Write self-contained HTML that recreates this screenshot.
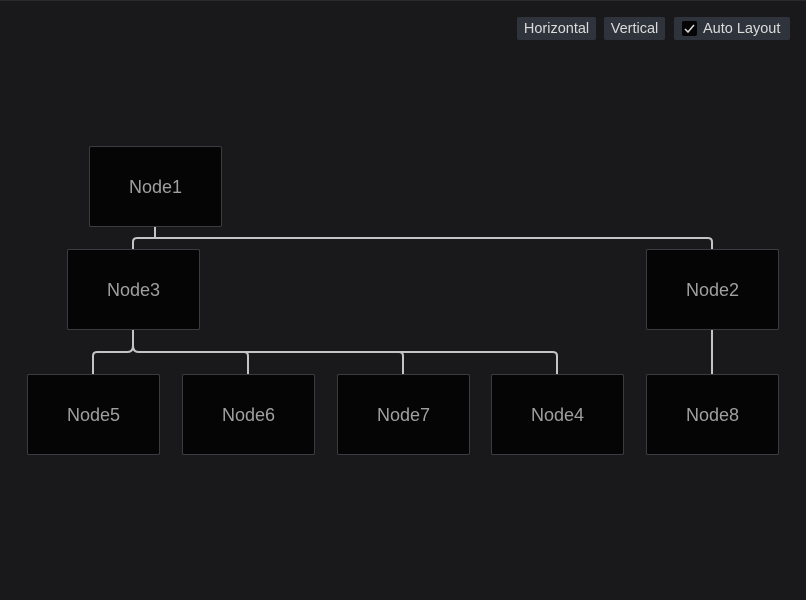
<!DOCTYPE html><html><head><style>
body{margin:0;width:806px;height:600px;background:#19191b;font-family:"Liberation Sans",sans-serif;overflow:hidden;position:relative}
.n{position:absolute;width:131px;height:79px;background:#050505;border:1px solid #3c3c40;border-radius:2px;color:#a0a0a0;font-size:18px;display:flex;align-items:center;justify-content:center;padding-top:1px;box-sizing:content-box}
.b{position:absolute;top:17px;height:23px;background:#2f333b;border-radius:2px;color:#dcdcdc;font-size:14.5px;display:flex;align-items:center;justify-content:center}
</style></head><body>
<div style="position:absolute;left:0;top:0;width:806px;height:1px;background:#2a2a2d"></div>
<svg width="806" height="600" style="position:absolute;left:0;top:0" fill="none" stroke="#c4c4c6" stroke-width="2">
<path d="M155 226V238M133 249V242Q133 238 137 238H708Q712 238 712 242V249"/>
<path d="M712 329V374"/>
<path d="M133 329V346Q133 352 139 352H553Q557 352 557 356V374M133 346Q133 352 127 352H97Q93 352 93 356V374M248 374V356Q248 352 244 352M403 374V356Q403 352 399 352"/>
</svg>
<div class="n" style="left:89px;top:146px;height:78px">Node1</div>
<div class="n" style="left:67px;top:249px;height:78px">Node3</div>
<div class="n" style="left:646px;top:249px;height:78px">Node2</div>
<div class="n" style="left:27px;top:374px;height:78px">Node5</div>
<div class="n" style="left:182px;top:374px;height:78px">Node6</div>
<div class="n" style="left:337px;top:374px;height:78px">Node7</div>
<div class="n" style="left:491px;top:374px;height:78px">Node4</div>
<div class="n" style="left:646px;top:374px;height:78px">Node8</div>
<div class="b" style="left:517px;width:79px">Horizontal</div>
<div class="b" style="left:604px;width:61px">Vertical</div>
<div class="b" style="left:674px;width:116px;justify-content:flex-start"><span style="display:inline-block;width:15px;height:15px;background:#050505;border-radius:2px;margin:0 6px 0 8px;position:relative"><svg width="15" height="15" style="position:absolute;left:0;top:0"><path d="M3 8L6 11L12 4" stroke="#ddd" stroke-width="1.5" fill="none"/></svg></span>Auto Layout</div>
</body></html>
